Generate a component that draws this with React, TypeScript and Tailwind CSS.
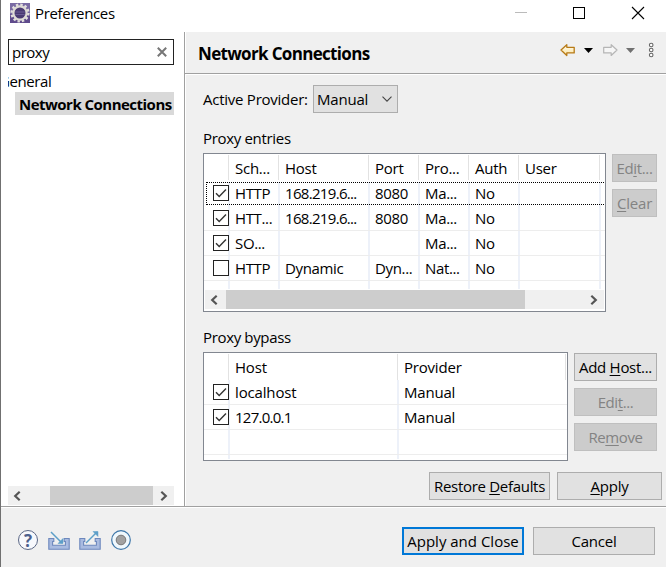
import React from "react";

const PROXY_COLUMNS = "grid grid-cols-[26px_50px_90px_50px_50px_50px_81px]";
const BYPASS_COLUMNS = "grid grid-cols-[26px_169px_167px]";

const PROXY_ROWS = [
  { checked: true, cells: ["HTTP", "168.219.6...", "8080", "Ma...", "No", ""] },
  { checked: true, cells: ["HTT...", "168.219.6...", "8080", "Ma...", "No", ""] },
  { checked: true, cells: ["SO...", "", "", "Ma...", "No", ""] },
  { checked: false, cells: ["HTTP", "Dynamic", "Dyn...", "Nat...", "No", ""] },
];

function Check({ checked }: { checked: boolean }) {
  return (
    <span className="block h-4 w-4 border border-[#222] bg-white">
      {checked && (
        <svg viewBox="0 0 14 14" className="h-[14px] w-[14px]" fill="none" stroke="#333" strokeWidth="1.4">
          <path d="M2 7.2 5.2 10.4 12 3.5" />
        </svg>
      )}
    </span>
  );
}

function HeaderCell({ text = "" }: { text?: string }) {
  return (
    <div className="flex h-full items-center pl-[5px]">
      <span className="grow">{text}</span>
      <span className="mr-px h-full w-px bg-[#e2e2e2]" />
    </div>
  );
}

function Cell({ children }: { children?: React.ReactNode }) {
  return <div className="flex items-center overflow-hidden border-r-2 border-[#edf1f9] pl-[5px] whitespace-nowrap">{children}</div>;
}

function BypassRow({ host }: { host: string }) {
  return (
    <div className={`${BYPASS_COLUMNS} h-[25px] border-b border-[#ededed]`}>
      <div className="flex items-center border-r-2 border-[#edf1f9] pl-[9px]">{host && <Check checked />}</div>
      <Cell>
        <span className={host === "localhost" ? "tracking-[-0.15px]" : "tracking-[-0.75px]"}>{host}</span>
      </Cell>
      <div className="flex items-center pl-[5px]">{host && "Manual"}</div>
    </div>
  );
}

function Chevron({ right = false }: { right?: boolean }) {
  return (
    <svg viewBox="0 0 8 10" className="h-[10px] w-2 shrink-0" fill="none" stroke="#555" strokeWidth="2.2">
      <path d={right ? "M1.3 .8 5.8 5 1.3 9.2" : "M6.7 .8 2.2 5 6.7 9.2"} />
    </svg>
  );
}

function Button({ className, disabled, primary, children }: {
  className: string;
  disabled?: boolean;
  primary?: boolean;
  children: React.ReactNode;
}) {
  const look = disabled
    ? "border border-[#bfbfbf] bg-[#ccc] text-[#838383]"
    : primary
      ? "border-2 border-[#0078d7] bg-[#e1e1e1]"
      : "border border-[#adadad] bg-[#e1e1e1]";
  return (
    <button className={`flex h-7 shrink-0 items-center justify-center whitespace-nowrap ${look} ${className}`}>
      <span>{children}</span>
    </button>
  );
}

function Key({ children }: { children: string }) {
  return <span className="underline decoration-1 underline-offset-2">{children}</span>;
}

function TitleBar() {
  return (
    <header className="flex h-8 shrink-0 items-start bg-white">
      <svg viewBox="0 0 20 20" className="mt-[3px] ml-[9px] h-5 w-5">
        <rect width="20" height="20" fill="#7a6ba3" />
        <path d="M0 11h20v9H0z" fill="#5f4b8c" />
        <circle cx="10" cy="10" r="8.4" fill="none" stroke="#e4e1de" strokeWidth="2.4" strokeDasharray="2.4 2" />
        <circle cx="10" cy="10" r="6.6" fill="#4a3a72" stroke="#dedbd5" strokeWidth="2.2" />
        <path d="M5.3 9h9.4M5.3 11.5h9.4" stroke="#6a5b94" strokeWidth="1" />
      </svg>
      <span className="mt-[2px] ml-[5px] grow leading-[22px] tracking-[-0.35px]">Preferences</span>
      <svg viewBox="0 0 140 32" className="h-8 w-[140px]" fill="none" shapeRendering="crispEdges">
        <path d="M4 12.5h12" stroke="#bbb" />
        <path d="M62.5 7.5h11v11h-11z" stroke="#000" />
        <path d="m121 7 12 12m0-12-12 12" stroke="#000" shapeRendering="auto" strokeWidth="1.1" />
      </svg>
      <span className="w-[15px]" />
    </header>
  );
}

function Sidebar() {
  return (
    <aside className="flex w-[183px] shrink-0 flex-col bg-white pt-[7px] pl-[7px]">
      <div className="flex h-[26px] w-[166px] items-center border border-[#222] pr-[6px] pl-[3px]">
        <span className="grow tracking-[-0.5px]">proxy</span>
        <svg viewBox="0 0 10 10" className="h-[10px] w-[10px]" stroke="#777" strokeWidth="2">
          <path d="m.8.8 8.4 8.4m0-8.4L.8 9.2" />
        </svg>
      </div>
      <div className="mt-[5px] h-[22px] w-[166px] overflow-hidden leading-[22px]">
        <span className="-ml-[9px] tracking-[-0.4px]">General</span>
      </div>
      <div className="ml-[7px] flex h-[23px] w-[159px] items-center overflow-hidden bg-[#d9d9d9] pl-1 font-bold tracking-[-0.52px] whitespace-nowrap">
        Network Connections
      </div>
      <div className="mt-auto flex h-[19px] w-[166px] items-center bg-[#f0f0f0]">
        <span className="flex w-[42px] pl-[5px]"><Chevron /></span>
        <span className="h-full w-[103px] bg-[#cdcdcd]" />
        <span className="flex grow pl-[7px]"><Chevron right /></span>
      </div>
      <div className="h-px shrink-0" />
    </aside>
  );
}

function NavigationIcons() {
  return (
    <svg viewBox="0 0 100 20" className="mt-[-5px] h-5 w-[100px]" fill="none">
      <defs>
        <linearGradient id="gold" x1="0" y1="0" x2="0" y2="1">
          <stop offset="0" stopColor="#fffdf2" />
          <stop offset="1" stopColor="#fbe3a0" />
        </linearGradient>
      </defs>
      <path d="M1 10 6.8 4.7v2.6h7.4v5.6H6.800v2.6z" fill="url(#gold)" stroke="#b77a16" strokeWidth="1.3" strokeLinejoin="round" />
      <path d="M24 8h9l-4.500 5z" fill="#000" />
      <path d="M57 10 51.200 4.700v2.600h-7.500v5.600h7.500v2.600z" fill="#f6f6f6" stroke="#b5b5b5" strokeWidth="1.2" strokeLinejoin="round" />
      <path d="M66 8h9l-4.500 5z" fill="#707070" />
      <g stroke="#666" strokeWidth="1.1" fill="#fff">
        <circle cx="91.2" cy="5" r="1.8" />
        <circle cx="91.2" cy="10" r="1.8" />
        <circle cx="91.2" cy="15" r="1.8" />
      </g>
    </svg>
  );
}

function ProxyTable() {
  return (
    <div className="flex h-[159px] w-[403px] shrink-0 flex-col overflow-hidden border border-[#828790] bg-white pt-px">
      <div className={`${PROXY_COLUMNS} mb-[2px] h-[25px] shrink-0 tracking-[-0.25px]`}>
        {["", "Sch...", "Host", "Port", "Pro...", "Auth", "User"].map((text, i) => (
          <HeaderCell key={i} text={text} />
        ))}
      </div>
      {PROXY_ROWS.map((row, r) => (
        <div
          key={r}
          className={`${PROXY_COLUMNS} relative shrink-0 tracking-[-0.35px] ${r === 0 ? "h-[24px]" : "h-[25px] border-b border-[#ededed]"}`}
        >
          <div className="flex items-center border-r-2 border-[#edf1f9] pl-[9px]">
            <span className={r === 0 ? "-mt-[2px]" : ""}><Check checked={row.checked} /></span>
          </div>
          {row.cells.map((text, c) => (
            <Cell key={c}>
              <span className={`${r === 0 ? "-mt-[2px]" : ""} ${c === 1 && r < 2 ? "tracking-[-0.68px]" : ""}`}>{text}</span>
            </Cell>
          ))}
          {r === 0 && <div className="absolute top-0 left-[2px] h-[23px] w-[410px] border border-dotted border-black" />}
        </div>
      ))}
      <div className={`${PROXY_COLUMNS} h-[8px] shrink-0`}>
        {[0, 1, 2, 3, 4, 5, 6].map((c) => <Cell key={c} />)}
      </div>
      <div className="mt-px mr-px ml-px flex h-[19px] items-center bg-[#f0f0f0]">
        <span className="flex w-[21px] pl-[5px]"><Chevron /></span>
        <span className="h-full w-[299px] bg-[#cdcdcd]" />
        <span className="flex grow justify-end pr-[6px]"><Chevron right /></span>
      </div>
    </div>
  );
}

function BypassTable() {
  return (
    <div className="h-[109px] w-[365px] shrink-0 overflow-hidden border border-[#828790] bg-white pt-px">
      <div className="grid h-[26px] grid-cols-[26px_169px_168px]">
        <HeaderCell />
        <HeaderCell text="Host" />
        <HeaderCell text="Provider" />
      </div>
      <BypassRow host="localhost" />
      <BypassRow host="127.0.0.1" />
      <BypassRow host="" />
      <div className={`${BYPASS_COLUMNS} h-1`}>
        <Cell />
        <Cell />
      </div>
    </div>
  );
}

function Content() {
  return (
    <main className="flex grow flex-col border-l border-[#a0a0a0]">
      <div className="flex h-[41px] shrink-0 items-center justify-between border-l border-white pr-[6px] pl-3">
        <h1 className="pt-[3px] text-[17px] font-bold tracking-[-0.67px]">Network Connections</h1>
        <NavigationIcons />
      </div>
      <div className="h-[2px] shrink-0 border-t border-[#a0a0a0] bg-white" />
      <div className="grow border-l border-white pl-[17px]">
        <div className="flex h-[38px] items-end">
          <span className="w-[110px] pb-px leading-[26px] tracking-[-0.25px] whitespace-nowrap">Active Provider:</span>
          <div className="flex h-7 w-[85px] items-center justify-between border border-[#adadad] bg-[#e1e1e1] pr-[5px] pl-[3px]">
            <span>Manual</span>
            <svg viewBox="0 0 10 6" className="h-[6px] w-[10px]" fill="none" stroke="#444" strokeWidth="1.1">
              <path d="m.5.7 4.5 4.5L9.5.7" />
            </svg>
          </div>
        </div>
        <div className="h-10 pt-[14px] leading-[22px] tracking-[-0.32px]">Proxy entries</div>
        <div className="flex gap-[6px]">
          <ProxyTable />
          <div className="flex flex-col gap-[7px] pt-px">
            <Button disabled className="w-[45px] tracking-[-0.35px]">Ed<Key>i</Key>t...</Button>
            <Button disabled className="w-[45px]"><Key>C</Key>lear</Button>
          </div>
        </div>
        <div className="h-10 pt-[14px] leading-[22px] tracking-[-0.35px]">Proxy bypass</div>
        <div className="flex gap-[6px]">
          <BypassTable />
          <div className="flex flex-col gap-[7px] pt-px">
            <Button className="w-[83px] tracking-[-0.3px]">Add <Key>H</Key>ost...</Button>
            <Button disabled className="w-[83px] tracking-[-0.4px]">Edi<Key>t</Key>...</Button>
            <Button disabled className="w-[83px] tracking-[-0.4px]">Re<Key>m</Key>ove</Button>
          </div>
        </div>
        <div className="mt-[11px] flex justify-end gap-[7px] pr-1">
          <Button className="w-[121px] tracking-[-0.3px]">Restore <Key>D</Key>efaults</Button>
          <Button className="w-[105px]"><Key>A</Key>pply</Button>
        </div>
      </div>
    </main>
  );
}

function TransferIcon({ outgoing = false }: { outgoing?: boolean }) {
  return (
    <svg viewBox="0 0 22 20" className="h-5 w-[22px]" fill="none">
      <path d="M.8 8.500h5v3H4.600v3.700h12.800v-3.700h-1.200v-3h5v10.700H.8z" fill="#a9bbe0" stroke="#6d88bd" strokeWidth="1.1" />
      {outgoing ? (
        <g stroke="#5d9fc8" strokeWidth="1.5"><path d="M7 13 18 2" /><path d="M14 1.500h5v5z" fill="#5d9fc8" strokeWidth=".5" /></g>
      ) : (
        <g stroke="#5d9fc8" strokeWidth="1.5"><path d="m3 2 11 11" /><path d="M10 13.500h5v-5z" fill="#5d9fc8" strokeWidth=".5" /></g>
      )}
    </svg>
  );
}

function Footer() {
  return (
    <footer className="flex h-[61px] shrink-0 flex-col">
      <div className="h-[2px] shrink-0 border-t border-[#a0a0a0] bg-white" />
      <div className="flex pt-[19px] pr-[11px] pl-[17px]">
        <div className="flex grow pt-[3px]">
          <span className="flex h-5 w-5 items-center justify-center rounded-full border border-[#5b6786] bg-[#f7f8fc] text-[17px] leading-none font-bold text-[#4b5f8d]">?</span>
          <span className="ml-[10px]"><TransferIcon /></span>
          <span className="ml-[9px]"><TransferIcon outgoing /></span>
          <svg viewBox="0 0 20 20" className="ml-[10px] h-5 w-5">
            <circle cx="10" cy="10" r="9.3" fill="#eff8fd" stroke="#3d76a8" strokeWidth="1.2" />
            <circle cx="10" cy="10" r="4.8" fill="#a1a1a1" stroke="#777" />
          </svg>
        </div>
        <div className="flex gap-[9px]">
          <Button primary className="w-[122px] tracking-[0px]">Apply and Close</Button>
          <Button className="w-[122px]">Cancel</Button>
        </div>
      </div>
    </footer>
  );
}

export default function App() {
  return (
    <div className="flex h-[567px] w-[666px] flex-col overflow-hidden border-l border-[#707070] bg-[#f0f0f0] font-['Open_Sans','Noto_Sans',sans-serif] text-[15px] leading-5 tracking-[-0.2px] text-black">
      <TitleBar />
      <div className="flex h-[474px] shrink-0">
        <Sidebar />
        <Content />
      </div>
      <Footer />
    </div>
  );
}
